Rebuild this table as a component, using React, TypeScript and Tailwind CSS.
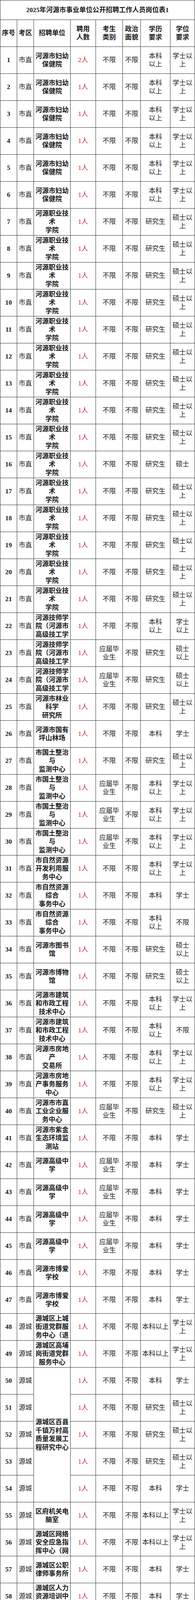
import React from "react";

type Row = {
  no: number;
  area: string;
  unit?: string[];
  span?: number;
  count: string;
  cat: string[];
  pol: string[];
  edu: string[];
  deg: string[];
};

const FY = ["河源市妇幼", "保健院"];
const ZY = ["河源职业技", "术", "学院"];
const JS = ["河源技师学", "院（河源市", "高级技工学"];
const GT = ["市国土整治", "与", "监测中心"];
const BK2 = ["本科", "以上"];
const XS3 = ["学士以", "上"];
const SS3 = ["硕士以", "上"];
const YJ = ["应届毕", "业生"];
const BX = ["不限"];

const r = (
  no: number,
  area: string,
  unit: string[] | undefined,
  cat: string[],
  edu: string[],
  deg: string[],
  count = "1人",
  span?: number
): Row => ({ no, area, unit, span, count, cat, pol: BX, edu, deg });

const rows: Row[] = [
  r(1, "市直", FY, BX, BK2, XS3, "2人"),
  r(2, "市直", FY, BX, BK2, XS3),
  r(3, "市直", FY, BX, BK2, XS3),
  r(4, "市直", FY, BX, BK2, XS3),
  r(5, "市直", FY, BX, BK2, XS3),
  r(6, "市直", FY, BX, BK2, XS3),
  ...[7, 8, 9, 10, 11, 12, 13, 14, 15, 16, 17, 18, 19, 20, 21].map((n) =>
    r(n, "市直", ZY, BX, ["研究生"], n === 16 ? ["硕士"] : SS3)
  ),
  r(22, "市直", JS, BX, BK2, ["学士", "以上"]),
  r(23, "市直", JS, YJ, ["研究生"], ["硕士", "以上"]),
  r(24, "市直", JS, YJ, ["研究生"], ["硕士", "以上"]),
  r(25, "市直", ["河源市林业", "科学", "研究所"], BX, ["研究生"], SS3),
  r(26, "市直", ["河源市国有", "坪山林场"], BX, ["本科"], ["学士"]),
  r(27, "市直", GT, BX, ["研究生"], SS3),
  r(28, "市直", GT, YJ, BK2, XS3),
  r(29, "市直", GT, YJ, BK2, XS3),
  r(30, "市直", GT, YJ, BK2, XS3),
  r(31, "市直", ["市自然资源", "开发利用服", "务中心"], BX, BK2, XS3),
  r(32, "市直", ["市自然资源", "综合", "事务中心"], BX, ["本科"], ["学士"]),
  r(33, "市直", ["市自然资源", "综合", "事务中心"], BX, BK2, BX),
  r(34, "市直", ["河源市图书", "馆"], BX, ["研究生"], ["硕士", "以上"]),
  r(35, "市直", ["河源市博物", "馆"], BX, ["研究生"], ["硕士", "以上"]),
  r(36, "市直", ["河源市建筑", "和市政工程", "技术中心"], BX, BK2, XS3),
  r(37, "市直", ["河源市建筑", "和市政工程", "技术中心"], BX, BK2, BX),
  r(38, "市直", ["河源市房地", "产", "交易所"], BX, BK2, XS3),
  r(39, "市直", ["河源市房地", "产事务服务", "中心"], BX, BK2, XS3),
  r(40, "市直", ["河源市市直", "工业企业服", "务中心"], YJ, ["研究生"], SS3),
  r(41, "市直", ["河源市紫金", "生态环境监", "测站"], BX, ["本科"], ["学士"]),
  ...[42, 43, 44, 45].map((n) =>
    r(n, "市直", ["河源高级中", "学"], YJ, ["本科"], ["学士"])
  ),
  r(46, "市直", ["河源市博爱", "学校"], BX, ["本科"], ["学士"]),
  r(47, "市直", ["河源市博爱", "学校"], BX, ["本科"], ["学士"]),
  r(48, "源城", ["源城区上城", "街道党群服", "务中心（退"], BX, ["本科以上"], XS3),
  r(49, "源城", ["源城区高埔", "岗街道党群", "服务中心"], BX, ["本科以上"], XS3),
  r(50, "源城", ["源城区百县", "千镇万村高", "质量发展工", "程研究中心"], BX, ["本科"], ["学士"], "1人", 5),
  r(51, "源城", undefined, BX, ["研究生"], SS3),
  r(52, "源城", undefined, BX, ["研究生"], SS3),
  r(53, "源城", undefined, BX, ["研究生"], SS3),
  r(54, "源城", undefined, BX, ["本科"], ["学士"]),
  r(55, "源城", ["区府机关电", "脑室"], BX, ["本科以上"], XS3),
  r(56, "源城", ["源城区网络", "安全应急指", "挥中心（网"], BX, ["本科以上"], XS3),
  r(57, "源城", ["源城区公职", "律师事务所"], BX, ["本科"], ["学士"]),
  r(58, "源城", ["源城区人力", "资源培训中", "心"], BX, ["本科"], ["学士"]),
  r(59, "源城", ["源城区消防", "事务中心"], BX, ["本科"], ["学士"], "1人", 3),
  r(60, "源城", undefined, BX, ["本科"], ["学士"]),
  r(61, "源城", undefined, BX, ["本科"], BX),
];

const headers: string[][] = [
  ["序号"],
  ["考区"],
  ["招聘单位"],
  ["聘用", "人数"],
  ["考生", "类别"],
  ["政治", "面貌"],
  ["学历", "要求"],
  ["学位", "要求"],
];

function Cell({ lines, className = "h-[68px]" }: { lines: string[]; className?: string }) {
  return (
    <div
      className={`flex flex-col items-center justify-center overflow-hidden bg-white text-center ${className}`}
    >
      {lines.map((l, i) => (
        <span key={i} className="block h-[21.5px] whitespace-nowrap leading-[21.5px]">
          {l}
        </span>
      ))}
    </div>
  );
}

export default function App() {
  return (
    <div
      className="w-[500px] bg-white text-[17px] text-[#1a1a1a]"
      style={{ fontFamily: '"Liberation Serif", "Noto Sans CJK SC", serif' }}
    >
      <div className="grid grid-cols-[42px_42px_93px_64px_68px_45px_75px_62px] gap-px bg-[#333] p-px">
        <div className="col-span-8 flex h-[49px] items-center justify-center bg-white text-[17px] font-bold">
          2025年河源市事业单位公开招聘工作人员岗位表1
        </div>
        {headers.map((h, i) => (
          <Cell key={i} lines={h} className="h-[68px] font-bold" />
        ))}
        {rows.map((row) => (
          <React.Fragment key={row.no}>
            <Cell lines={[String(row.no)]} className="h-[68px] font-bold" />
            <Cell lines={[row.area]} />
            {row.unit && (
              <Cell
                lines={row.unit}
                className={
                  row.span === 5
                    ? "row-span-5 font-bold"
                    : row.span === 3
                      ? "row-span-3 font-bold"
                      : "h-[68px] font-bold"
                }
              />
            )}
            <Cell lines={[row.count]} className="h-[68px] text-[#d21f26]" />
            <Cell lines={row.cat} />
            <Cell lines={row.pol} />
            <Cell lines={row.edu} />
            <Cell lines={row.deg} />
          </React.Fragment>
        ))}
      </div>
    </div>
  );
}
